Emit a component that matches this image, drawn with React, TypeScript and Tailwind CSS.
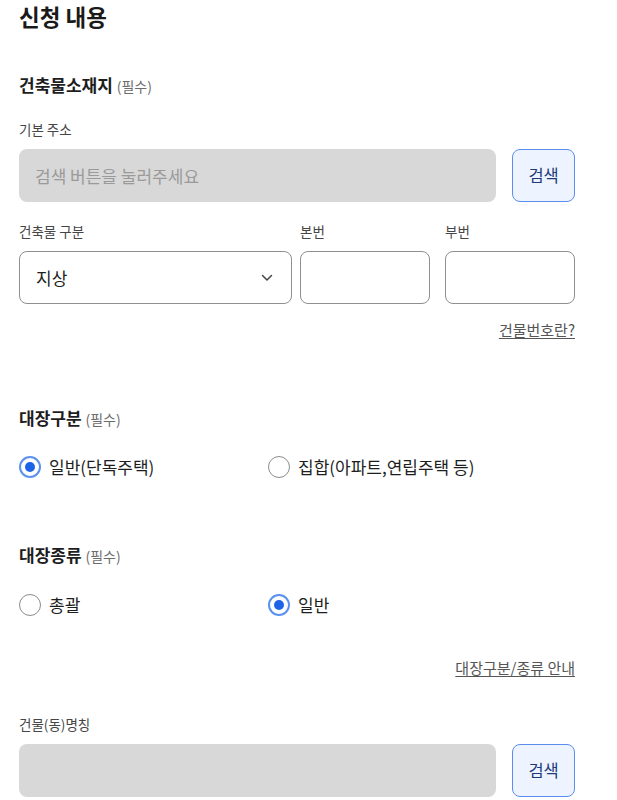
const font = { fontFamily: '"Noto Sans CJK KR", "Noto Sans", sans-serif' };

function SectionTitle({ children }: { children: React.ReactNode }) {
  return (
    <h3 className="h-6 text-[17px] leading-6 font-bold text-[#1e1e1e]">
      {children}{" "}
      <span className="text-[14px] font-normal text-[#6d6d6d]">(필수)</span>
    </h3>
  );
}

function Label({ children }: { children: React.ReactNode }) {
  return (
    <div className="h-5 mb-[10px] text-[13.5px] leading-5 text-[#464646]">{children}</div>
  );
}

function Radio({ label, checked }: { label: string; checked?: boolean }) {
  return (
    <label className="flex items-center h-6 w-[249px] shrink-0">
      <span
        className={
          checked
            ? "flex items-center justify-center w-[22px] h-[22px] rounded-full border-2 border-[#5b91f0]"
            : "w-[22px] h-[22px] rounded-full border-[1.5px] border-[#8c8c8c]"
        }
      >
        {checked && <span className="w-[10px] h-[10px] rounded-full bg-[#1d63e8]" />}
      </span>
      <span className="ml-[8px] text-[17px] leading-6 text-[#1e1e1e]">{label}</span>
    </label>
  );
}

function SearchRow({ placeholder }: { placeholder?: string }) {
  return (
    <div className="flex gap-4">
      <div className="w-[478px] h-[53px] rounded-lg bg-[#d8d8d8] flex items-center px-4 text-[17px] text-[#9a9a9a]">
        {placeholder}
      </div>
      <button className="w-[63px] h-[53px] rounded-lg border border-[#5b8def] bg-[#eef4ff] text-[16.5px] text-[#1b3a7a]">
        검색
      </button>
    </div>
  );
}

export default function App() {
  return (
    <div className="min-h-screen bg-white pl-[19px]" style={font}>
      <div className="w-[556px]">
        <h2 className="h-8 text-[22.5px] leading-8 font-bold text-[#1a1a1a]">신청 내용</h2>

        {/* 건축물소재지 */}
        <div className="mt-[41px]">
          <SectionTitle>건축물소재지</SectionTitle>
        </div>
        <div className="mt-[22px]">
          <Label>기본 주소</Label>
          <SearchRow placeholder="검색 버튼을 눌러주세요" />
        </div>

        <div className="mt-[19px] flex">
          <div className="w-[273px]">
            <Label>건축물 구분</Label>
            <div className="h-[53px] rounded-lg border border-[#8f8f8f] flex items-center justify-between pl-4 pr-[18px]">
              <span className="text-[17px] text-[#1e1e1e]">지상</span>
              <svg width="12" height="8" viewBox="0 0 12 8" fill="none">
                <path d="M1.5 1.5 6 6l4.5-4.5" stroke="#444" strokeWidth="1.5" strokeLinecap="round" strokeLinejoin="round" />
              </svg>
            </div>
          </div>
          <div className="w-[130px] ml-[8px]">
            <Label>본번</Label>
            <div className="h-[53px] rounded-lg border border-[#8f8f8f]" />
          </div>
          <div className="w-[130px] ml-[15px]">
            <Label>부번</Label>
            <div className="h-[53px] rounded-lg border border-[#8f8f8f]" />
          </div>
        </div>

        <div className="mt-4 flex justify-end">
          <a href="#" className="h-5 text-[15px] leading-5 text-[#555] underline underline-offset-2">
            건물번호란?
          </a>
        </div>

        {/* 대장구분 */}
        <div className="mt-[66px]">
          <SectionTitle>대장구분</SectionTitle>
        </div>
        <div className="mt-[25px] flex">
          <Radio label="일반(단독주택)" checked />
          <Radio label="집합(아파트,연립주택 등)" />
        </div>

        {/* 대장종류 */}
        <div className="mt-[64px]">
          <SectionTitle>대장종류</SectionTitle>
        </div>
        <div className="mt-[26px] flex">
          <Radio label="총괄" />
          <Radio label="일반" checked />
        </div>

        <div className="mt-[41px] flex justify-end">
          <a href="#" className="h-5 text-[15px] leading-5 text-[#555] underline underline-offset-2">
            대장구분/종류 안내
          </a>
        </div>

        <div className="mt-9">
          <Label>건물(동)명칭</Label>
          <SearchRow />
        </div>
      </div>
    </div>
  );
}
